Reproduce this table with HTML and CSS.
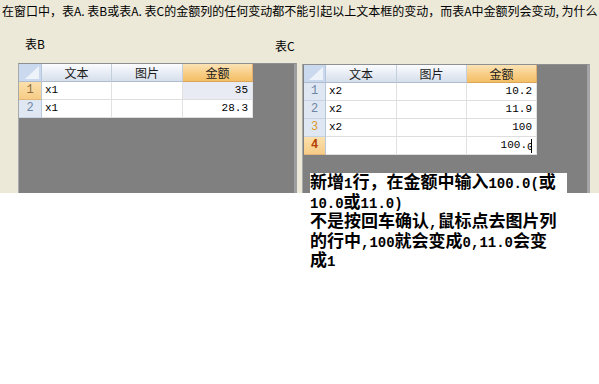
FILE: index.html
```html
<!DOCTYPE html>
<html>
<head>
<meta charset="utf-8">
<link rel="stylesheet" href="styles.css">
</head>
<body>
<div class="form">
  <div class="title">在窗口中，表A. 表B或表A. 表C的金额列的任何变动都不能引起以上文本框的变动，而表A中金额列会变动, 为什么</div>
  <div class="panels">
    <div class="col col-b">
      <div class="label">表B</div>
      <div class="panel panel-b">
        <div class="grid grid-b">
          <div class="hdr corner"><span class="tri"></span></div>
          <div class="hdr">文本</div>
          <div class="hdr">图片</div>
          <div class="hdr sel">金额</div>

          <div class="rh sel">1</div>
          <div class="cell">x1</div>
          <div class="cell"></div>
          <div class="cell num cur">35</div>

          <div class="rh">2</div>
          <div class="cell">x1</div>
          <div class="cell"></div>
          <div class="cell num">28.3</div>
        </div>
      </div>
    </div>
    <div class="col col-c">
      <div class="label">表C</div>
      <div class="panel panel-c">
        <div class="grid grid-c">
          <div class="hdr corner"><span class="tri"></span></div>
          <div class="hdr">文本</div>
          <div class="hdr">图片</div>
          <div class="hdr sel">金额</div>

          <div class="rh">1</div>
          <div class="cell">x2</div>
          <div class="cell"></div>
          <div class="cell num">10.2</div>

          <div class="rh">2</div>
          <div class="cell">x2</div>
          <div class="cell"></div>
          <div class="cell num">11.9</div>

          <div class="rh hint">3</div>
          <div class="cell">x2</div>
          <div class="cell"></div>
          <div class="cell num">100</div>

          <div class="rh sel red">4</div>
          <div class="cell"></div>
          <div class="cell"></div>
          <div class="cell num">100.<span class="clip">0</span></div>
        </div>
      </div>
    </div>
  </div>
</div>
<div class="note">新增<span class="l">1</span>行，在金额中输入<span class="l">100.0(</span>或<br><span class="l">10.0</span>或<span class="l">11.0)</span><br>不是按回车确认<span class="l">,</span>鼠标点去图片列<br>的行中<span class="l">,100</span>就会变成<span class="l">0,11.0</span>会变<br>成<span class="l">1</span></div>
</body>
</html>
```

FILE: styles.css
```css
html, body {
  margin: 0;
  padding: 0;
  background: #ffffff;
}
body {
  width: 599px;
  height: 384px;
  position: relative;
  overflow: hidden;
  font-family: "Noto Sans CJK SC", sans-serif;
  font-size: 12px;
  color: #000;
}
.form {
  background: #ece9d8;
  height: 193px;
  overflow: hidden;
}
.title {
  padding: 3px 0 0 2px;
  height: 16px;
  line-height: 16px;
  white-space: nowrap;
  overflow: hidden;
  font-size: 12px;
}
.panels {
  display: flex;
  align-items: flex-start;
  margin-top: 18px;
}
.col {
  display: flex;
  flex-direction: column;
}
.col-b {
  margin-left: 18px;
}
.col-c {
  margin-left: 5px;
}
.label {
  height: 14px;
  line-height: 14px;
  font-size: 12px;
}
.col-b .label {
  margin-left: 7px;
}
.col-c .label {
  margin-left: -27px;
  margin-top: 2px;
}
.panel {
  background: #808080;
  height: 200px;
  border-left: 1px solid #a7a9ab;
  border-top: 1px solid #8d8f90;
}
.panel-b {
  width: 275px;
  margin-top: 12px;
  border-right: 3px solid #9c9ea0;
}
.panel-c {
  width: 283px;
  margin-top: 11px;
  border-right: 3px solid #a3a5a6;
  padding-left: 1px;
}
.grid {
  display: grid;
  grid-auto-rows: 18px;
  background: #ffffff;
  width: max-content;
}
.grid-b {
  grid-template-columns: 23px 70px 71px 70px;
}
.grid-c {
  grid-template-columns: 22px 71px 70px 70px;
}
.hdr {
  background: linear-gradient(#fbfcfe, #e4eaf3 60%, #d6dfeb);
  border-right: 1px solid #c4cfdc;
  border-bottom: 1px solid #aebccd;
  text-align: center;
  line-height: 17px;
  font-size: 12px;
  color: #1a1a1a;
}
.hdr.sel {
  background: linear-gradient(#fbe3b6, #f8cd85 55%, #f4bf66);
  border-right-color: #e3b070;
  border-bottom-color: #d9a45c;
}
.corner {
  position: relative;
  background: #cad9ee;
  border-right-color: #b7c6da;
}
.tri {
  position: absolute;
  right: 2px;
  bottom: 2px;
  width: 0;
  height: 0;
  border-left: 14px solid transparent;
  border-bottom: 13px solid #eef3fa;
}
.rh {
  background: #dfe7f2;
  border-right: 1px solid #b7c6da;
  border-bottom: 1px solid #c7d3e2;
  text-align: center;
  line-height: 17px;
  color: #6f85a6;
  font-family: "Liberation Mono", monospace;
  font-size: 12px;
}
.rh.sel {
  background: linear-gradient(#fbe0ad, #f7cc86);
  border-bottom-color: #e0b777;
  color: #8a6a3c;
}
.rh.red {
  color: #b34000;
  font-weight: bold;
}
.rh.hint {
  color: #e09a30;
}
.cell {
  border-right: 1px solid #e1e1e1;
  border-bottom: 1px solid #dedede;
  line-height: 17px;
  padding: 0 4px 0 3px;
  font-family: "Liberation Mono", "Noto Sans CJK SC", monospace;
  font-size: 11px;
  white-space: nowrap;
  overflow: hidden;
  background: #ffffff;
}
.cell.num {
  text-align: right;
}
.cell.cur {
  background: #e9ebf4;
}
.clip {
  display: inline-block;
  width: 4px;
  overflow: hidden;
  vertical-align: bottom;
  border-right: 1px solid #000;
  height: 14px;
  margin-bottom: 1px;
}
.note {
  position: absolute;
  left: 310px;
  top: 173px;
  width: 257px;
  background: #ffffff;
  font-family: "Noto Sans CJK SC", sans-serif;
  font-weight: bold;
  font-size: 17px;
  line-height: 16.5px;
  white-space: nowrap;
  color: #000;
}
.note .l {
  font-family: "Liberation Mono", monospace;
  font-size: 14px;
  font-weight: bold;
}
```
